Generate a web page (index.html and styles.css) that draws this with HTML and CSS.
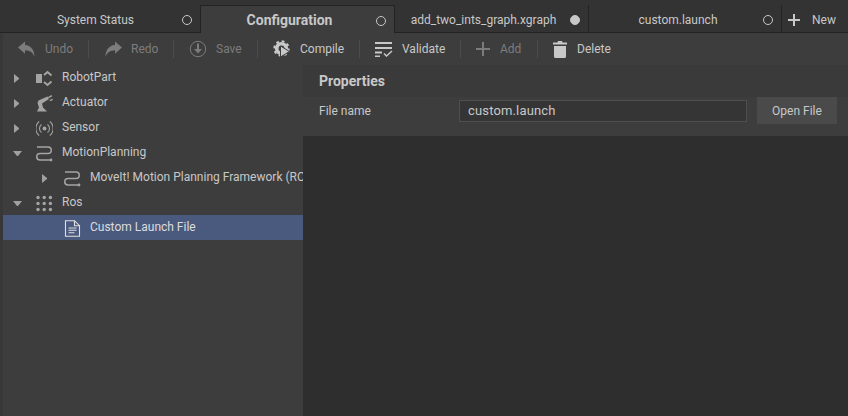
FILE: index.html
```html
<!DOCTYPE html>
<html>
<head>
    <title>Configuration</title>
    <link rel="stylesheet" href="styles.css">
</head>
<body>
    <div class="tabs">
        <div class="tab tab-status"><span class="tab-label">System Status</span><span class="dot"></span></div>
        <div class="tab tab-config active"><span class="tab-label">Configuration</span><span class="dot"></span></div>
        <div class="tab tab-graph"><span class="tab-label">add_two_ints_graph.xgraph</span><span class="dot filled"></span></div>
        <div class="tab tab-launch"><span class="tab-label">custom.launch</span><span class="dot"></span></div>
        <div class="tab-new">
            <svg class="new-icon" viewBox="0 0 12 12"><path d="M5 0h2v5h5v2H7v5H5V7H0V5h5z"/></svg>
            <span>New</span>
        </div>
    </div>

    <div class="toolbar">
        <div class="tool off tool-undo">
            <svg width="18" height="17" viewBox="0 0 18 17"><path d="M0 6.500L7 0.500V4C13 4.500 16.500 9 16.500 16C15 11.500 12 9.500 7 9.300V12.800z"/></svg>
            <span>Undo</span>
        </div>
        <div class="tool off tool-redo">
            <svg width="18" height="17" viewBox="0 0 18 17"><path d="M18 6.500L11 0.500V4C5 4.500 1.500 9 1.500 16C3 11.500 6 9.500 11 9.300V12.800z"/></svg>
            <span>Redo</span>
        </div>
        <div class="tool off tool-save">
            <svg width="18" height="18" viewBox="0 0 18 18"><circle class="ring" cx="9" cy="9" r="7.700"/><path d="M8 3.500h2V9h3l-4 4.500L5 9h3z"/></svg>
            <span>Save</span>
        </div>
        <div class="tool tool-compile">
            <svg width="18" height="18" viewBox="0 0 18 18"><circle class="gear-body" cx="8.500" cy="8.500" r="4.800"/><circle class="gear-teeth" cx="8.500" cy="8.500" r="7.200"/><path class="play" d="M7.500 6l9 5.500-9 5.500z"/></svg>
            <span>Compile</span>
        </div>
        <div class="tool tool-validate">
            <svg width="18" height="16" viewBox="0 0 18 16"><path d="M0 1h17v2H0zM0 6h17v2H0zM0 10.500h7v2H0zM0 14.500h5V16H0z"/><path class="check" d="M9 12.500l2.500 2.500L17 10"/></svg>
            <span>Validate</span>
        </div>
        <div class="tool off tool-add">
            <svg width="14" height="14" viewBox="0 0 14 14"><path d="M6 0h2v6h6v2H8v6H6V8H0V6h6z"/></svg>
            <span>Add</span>
        </div>
        <div class="tool tool-delete">
            <svg width="14" height="17" viewBox="0 0 14 17"><path d="M5 0h4l.5 1.500H14v2H0v-2h4.500zM1 5h12v10.500a1.500 1.500 0 0 1-1.500 1.500h-9A1.500 1.500 0 0 1 1 15.500z"/></svg>
            <span>Delete</span>
        </div>
    </div>

    <div class="main">
        <div class="tree">
            <div class="row">
                <span class="arrow right"></span>
                <svg class="row-icon" viewBox="0 0 17 17"><path d="M0 4h6v9H0z"/><path class="line heavy" d="M15.500 5.500L11.500 2 8 5M8 12l3.500 3 4-3.500"/></svg>
                <span class="row-text">RobotPart</span>
            </div>
            <div class="row">
                <span class="arrow right"></span>
                <svg class="row-icon" viewBox="0 0 17 17"><path d="M1 16.500L3 12.500 1.500 8 2.500 5.500 11.500 1.500 13 4 6 8.500 7 12.500 11 16.500z"/><path d="M12 2l3.500-2 .8 1.200-3.300 2zM13.500 5l3-1.200.5 1.200-3 1.200z"/></svg>
                <span class="row-text">Actuator</span>
            </div>
            <div class="row">
                <span class="arrow right"></span>
                <svg class="row-icon" viewBox="0 0 17 17"><circle cx="8.500" cy="8.500" r="2"/><path class="line thin" d="M5.500 4.500a5 5 0 0 0 0 8M11.500 4.500a5 5 0 0 1 0 8M3.200 1.500a9 9 0 0 0 0 14M13.800 1.500a9 9 0 0 1 0 14"/></svg>
                <span class="row-text">Sensor</span>
            </div>
            <div class="row">
                <span class="arrow down"></span>
                <svg class="row-icon" viewBox="0 0 17 17"><path class="line" d="M1 2h11a3 3 0 0 1 0 6.500H4a3 3 0 0 0 0 6.500h11"/><circle cx="15" cy="15" r="1.400"/></svg>
                <span class="row-text">MotionPlanning</span>
            </div>
            <div class="row child">
                <span class="arrow right"></span>
                <svg class="row-icon" viewBox="0 0 17 17"><path class="line" d="M1 2h11a3 3 0 0 1 0 6.500H4a3 3 0 0 0 0 6.500h11"/><circle cx="15" cy="15" r="1.400"/></svg>
                <span class="row-text">MoveIt! Motion Planning Framework (ROS)</span>
            </div>
            <div class="row">
                <span class="arrow down"></span>
                <svg class="row-icon" viewBox="0 0 17 17"><circle cx="2" cy="2.500" r="1.700"/><circle cx="8.200" cy="2.500" r="1.700"/><circle cx="14.400" cy="2.500" r="1.700"/><circle cx="2" cy="8.500" r="1.700"/><circle cx="8.200" cy="8.500" r="1.700"/><circle cx="14.400" cy="8.500" r="1.700"/><circle cx="2" cy="14.500" r="1.700"/><circle cx="8.200" cy="14.500" r="1.700"/><circle cx="14.400" cy="14.500" r="1.700"/></svg>
                <span class="row-text">Ros</span>
            </div>
            <div class="row child selected">
                <span class="arrow none"></span>
                <svg class="row-icon" viewBox="0 0 17 17"><path class="line thin" d="M1.500.700h9l5 5v10.600h-14z"/><path class="line thin" d="M10.500.700v5h5M4.500 8h8M4.500 10.300h8M4.500 12.700h6"/></svg>
                <span class="row-text">Custom Launch File</span>
            </div>
        </div>

        <div class="content">
            <div class="props">
                <div class="props-title">Properties</div>
                <div class="props-row">
                    <label class="props-label">File name</label>
                    <input class="props-input" type="text" value="custom.launch">
                    <button class="props-button">Open File</button>
                </div>
            </div>
        </div>
    </div>
</body>
</html>
```

FILE: styles.css
```css
html, body { margin: 0; height: 100%; overflow: hidden; }
body { width: 848px; height: 416px; background: #3d3d3d; font-family: Roboto, sans-serif; font-size: 12px; color: #c8c8c8; display: flex; flex-direction: column; }

.tabs { height: 33px; flex: none; display: flex; align-items: flex-end; background: #333333; padding-left: 3px; box-sizing: border-box; border-bottom: 1px solid #232323; }
.tab { height: 27px; padding-top: 2px; display: flex; align-items: center; box-sizing: border-box; position: relative; border-right: 1px solid #232323; background: #333333; }
.tab-status { width: 197px; border-right: none; }
.tab-config { width: 195px; }
.tab-graph { width: 194px; }
.tab-launch { width: 193px; }
.tab-label { flex: 1; text-align: center; padding-left: 4px; }
.tab-status .tab-label { padding-left: 6px; }
.tab-config .tab-label, .tab-graph .tab-label { padding-left: 2px; }
.tab.active { height: 28px; margin-bottom: -1px; background: #3d3d3d; border: 1px solid #232323; border-bottom: none; }
.tab.active .tab-label { font-size: 14px; font-weight: 700; margin-bottom: 2px; }
.dot { width: 10px; height: 10px; box-sizing: border-box; border: 1.500px solid #c8c8c8; border-radius: 50%; margin-right: 8px; flex: none; }
.dot.filled { background: #c8c8c8; }
.tab-new { flex: 1; display: flex; align-items: center; height: 27px; padding-left: 6px; padding-top: 2px; box-sizing: border-box; gap: 12px; }
.new-icon { width: 12px; height: 12px; fill: #c8c8c8; }

.toolbar { height: 32px; flex: none; display: flex; align-items: center; background: #3d3d3d; box-shadow: inset 3px 0 #383838; }
.tool { display: flex; align-items: center; gap: 9px; height: 18px; box-sizing: border-box; padding-left: 15px; border-right: 1px solid #4c4c4c; fill: #c8c8c8; flex: none; }
.tool svg { flex: none; }
.tool.off { color: #7c7c7c; fill: #7c7c7c; }
.tool-undo { width: 89px; padding-left: 18px; }
.tool-redo { width: 85px; }
.tool-save { width: 84px; }
.tool-compile { width: 102px; }
.tool-validate { width: 101px; }
.tool-add { width: 77px; gap: 10px; }
.tool-delete { border-right: none; gap: 10px; }
.ring { fill: none; stroke: #7c7c7c; stroke-width: 1; }
.check { fill: none; stroke: #c8c8c8; stroke-width: 1.500; }
.gear-body { fill: none; stroke: #c8c8c8; stroke-width: 3.600; }
.gear-teeth { fill: none; stroke: #c8c8c8; stroke-width: 2; stroke-dasharray: 2.800 2.850; }
.play { fill: #c8c8c8; stroke: #3d3d3d; stroke-width: 1; }

.main { flex: 1; display: flex; min-height: 0; padding-left: 3px; background: #383838; }
.tree { width: 300px; flex: none; overflow: hidden; background: #3d3d3d; }
.row { height: 25px; display: flex; align-items: center; padding-left: 11px; white-space: nowrap; }
.row.child { padding-left: 39px; }
.row.selected { background: #4a5a7f; color: #dcdcdc; }
.row-text { flex: none; margin-bottom: 2px; }
.arrow { width: 5px; height: 9px; flex: none; margin-right: 17px; margin-top: 1px; box-sizing: border-box; }
.arrow.right { border-left: 5px solid #a0a0a0; border-top: 4.500px solid transparent; border-bottom: 4.500px solid transparent; }
.arrow.down { width: 9px; height: 5px; margin-left: -1px; margin-right: 14px; border-top: 5px solid #a0a0a0; border-left: 4.500px solid transparent; border-right: 4.500px solid transparent; }
.row-icon { width: 17px; height: 17px; flex: none; margin-right: 9px; margin-top: 1px; fill: #a4a4a4; }
.line { fill: none; stroke: #a4a4a4; stroke-width: 1.500; }
.line.thin { stroke-width: 1.100; }
.line.heavy { stroke-width: 2; }
.selected .row-icon .line { stroke: #e0e0e0; }

.content { flex: 1; background: #2e2e2e; }
.props { height: 71px; background: #3d3d3d; }
.props-title { height: 32px; padding-left: 16px; display: flex; align-items: center; font-size: 14px; font-weight: 700; background: #3a3a3a; box-sizing: border-box; }
.props-row { height: 39px; display: flex; align-items: center; padding-left: 16px; padding-bottom: 12px; box-sizing: border-box; }
.props-label { width: 140px; flex: none; }
.props-input { width: 288px; height: 22px; box-sizing: border-box; background: #353535; border: 1px solid #4f4f4f; color: #c8c8c8; font-family: Roboto, sans-serif; font-size: 13px; letter-spacing: .15px; padding: 0 8px; margin: 0; }
.props-button { width: 80px; height: 27px; margin-left: 10px; background: #4a4a4a; border: none; color: #c8c8c8; font-family: Roboto, sans-serif; font-size: 12px; padding: 0; }
```
